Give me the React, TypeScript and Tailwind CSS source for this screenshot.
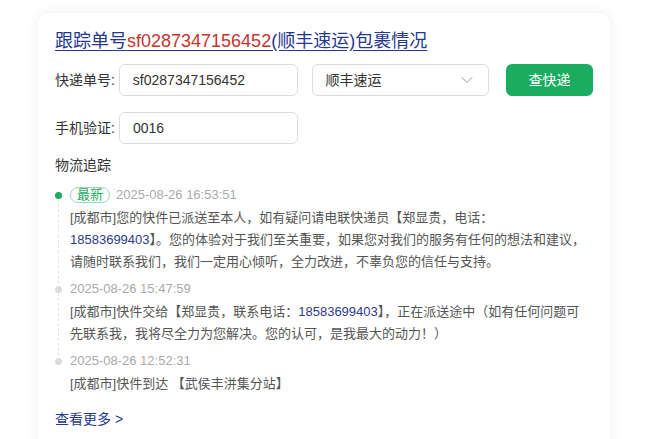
import { ChevronDown } from "lucide-react"

// each line of an event is an array of parts; a part is text or a phone number
const events = [
  {
    time: "2025-08-26 16:53:51",
    latest: true,
    lines: [
      ["[成都市]您的快件已派送至本人，如有疑问请电联快递员【郑显贵，电话："],
      [{ phone: "18583699403" }, "】。您的体验对于我们至关重要，如果您对我们的服务有任何的想法和建议，"],
      ["请随时联系我们，我们一定用心倾听，全力改进，不辜负您的信任与支持。"],
    ],
  },
  {
    time: "2025-08-26 15:47:59",
    latest: false,
    lines: [
      ["[成都市]快件交给【郑显贵，联系电话：", { phone: "18583699403" }, "】，正在派送途中（如有任何问题可"],
      ["先联系我，我将尽全力为您解决。您的认可，是我最大的动力！）"],
    ],
  },
  {
    time: "2025-08-26 12:52:31",
    latest: false,
    lines: [["[成都市]快件到达 【武侯丰洴集分站】"]],
  },
]

function TrackItem({ ev, last }: any) {
  return (
    <div className="relative pl-[15px] pb-[6px]">
      {!last && <div className="absolute left-[3px] top-[14px] bottom-[-10px] border-l border-dashed border-[#e3e3e3]" />}
      <div className={`absolute left-0 top-[7px] w-[7px] h-[7px] rounded-full ${ev.latest ? "bg-[#1aad5f]" : "bg-[#dcdcdc]"}`} />
      <div className="flex items-center h-[20px] text-[13px] text-[#aaaaaa]">
        {ev.latest && (
          <span className="mr-[6px] h-[16px] leading-[14px] px-[6px] rounded-full border border-[#9ad7b4] text-[#1aad5f] text-[13px]">最新</span>
        )}
        {ev.time}
      </div>
      <div className="mt-[2px] text-[13px] leading-[22px] text-[#555]">
        {ev.lines.map((line: any[], li: number) => (
          <div key={li} className="whitespace-nowrap">
            {line.map((p: any, i: number) =>
              typeof p === "string" ? p : <span key={i} className="text-[#2d3a8c]">{p.phone}</span>
            )}
          </div>
        ))}
      </div>
    </div>
  )
}

export default function App() {
  return (
    <div className="min-h-[439px] bg-white pt-[13px] pl-[38px] font-['Liberation_Sans','Noto_Sans_CJK_SC',sans-serif]">
      <div className="w-[572px] rounded-[12px] bg-white shadow-[0_0_14px_rgba(0,0,0,0.07)] px-[17px] pt-[16px] pb-[30px]">
        <h1 className="text-[18px] leading-[24px] underline underline-offset-[3px] text-[#25388f]">
          <a href="#">跟踪单号<span className="text-[#c4352e]">sf0287347156452</span>(顺丰速运)包裹情况</a>
        </h1>

        <div className="mt-[11px] flex items-center text-[14px] text-[#333]">
          <label className="w-[64px]">快递单号:</label>
          <div className="w-[179px] h-[32px] border border-[#dcdcdc] rounded-[6px] px-[13px] flex items-center">sf0287347156452</div>
          <div className="ml-[14px] w-[178px] h-[32px] border border-[#dcdcdc] rounded-[6px] pl-[13px] pr-[11px] flex items-center justify-between">
            <span>顺丰速运</span>
            <ChevronDown size={20} strokeWidth={1.2} className="text-[#999]" />
          </div>
          <button className="ml-[17px] w-[87px] h-[32px] rounded-[6px] bg-[#1aad5f] text-white text-[14px]">查快递</button>
        </div>

        <div className="mt-[16px] flex items-center text-[14px] text-[#333]">
          <label className="w-[64px]">手机验证:</label>
          <div className="w-[179px] h-[32px] border border-[#dcdcdc] rounded-[6px] px-[13px] flex items-center">0016</div>
        </div>

        <div className="mt-[11px] text-[14px] leading-[20px] text-[#333]">物流追踪</div>

        <div className="mt-[10px]">
          {events.map((ev, i) => (
            <TrackItem key={i} ev={ev} last={i === events.length - 1} />
          ))}
        </div>

        <a href="#" className="block mt-[8px] text-[14px] leading-[20px] text-[#25388f]">查看更多 &gt;</a>
      </div>
    </div>
  )
}
